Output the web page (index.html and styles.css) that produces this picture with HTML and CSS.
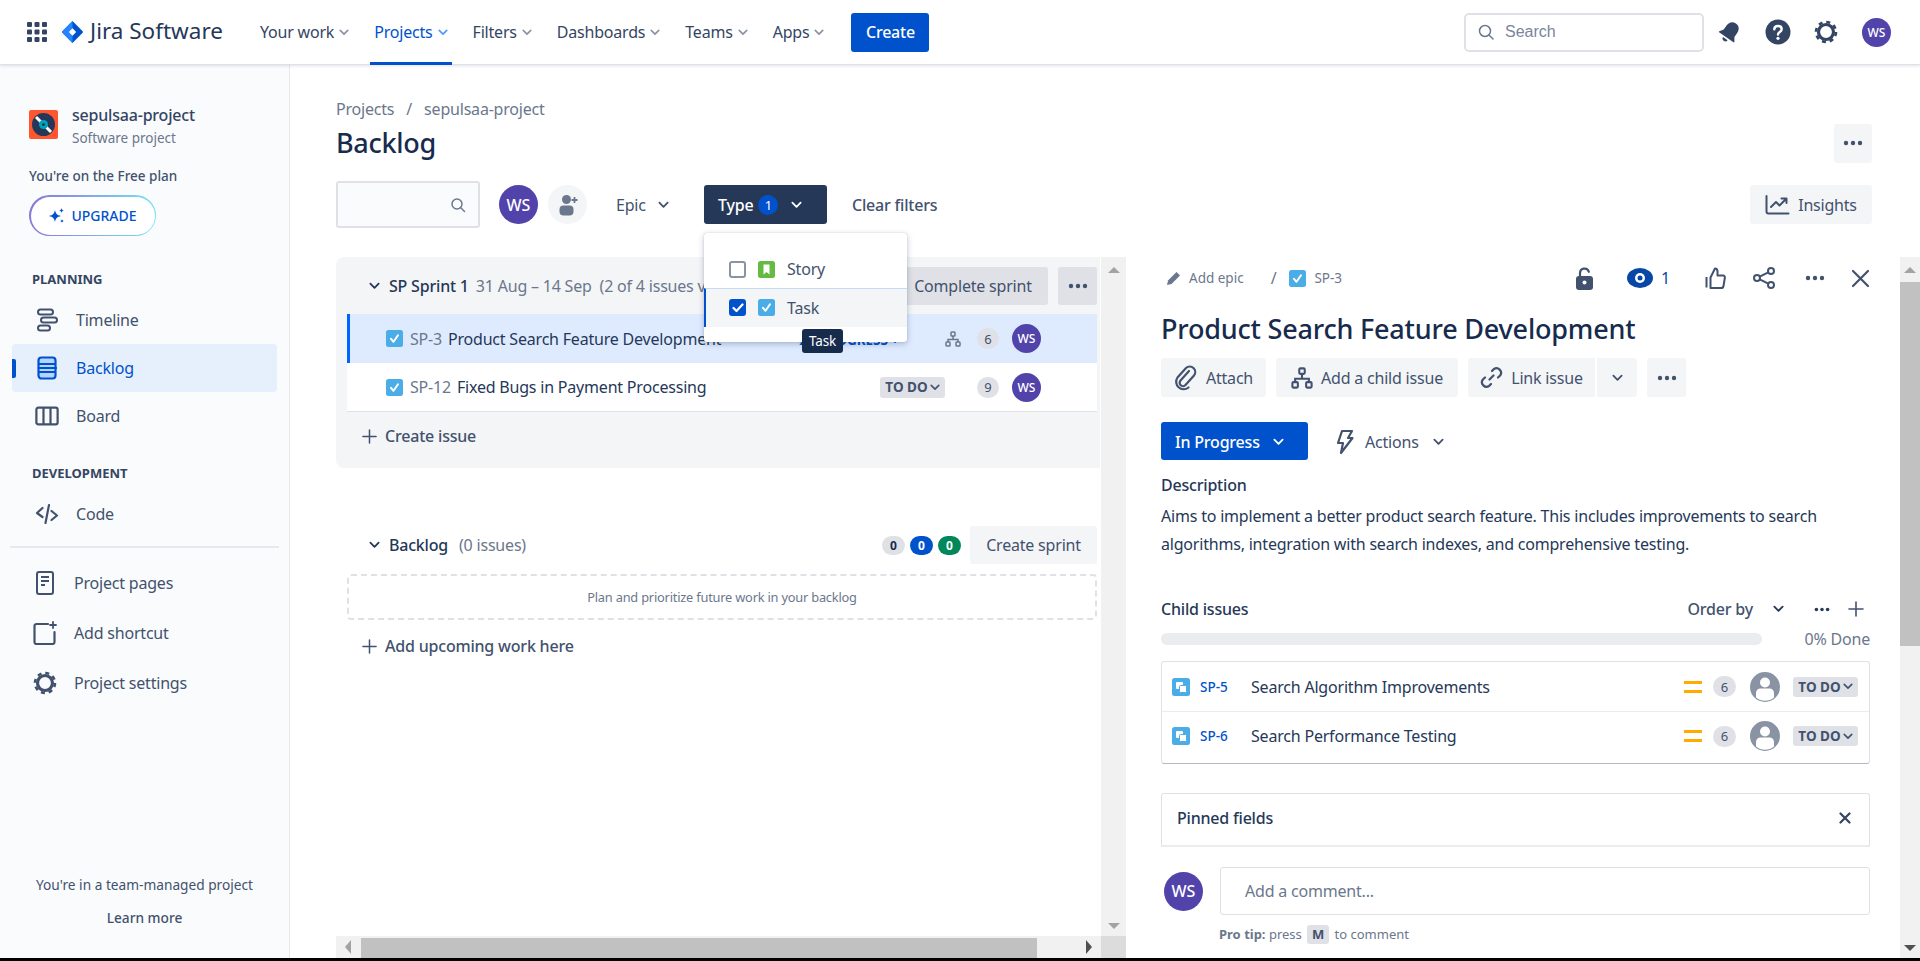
FILE: index.html
```html
<!DOCTYPE html>
<html lang="en">
<head>
  <meta charset="UTF-8" />
  <title>Backlog - sepulsaa-project</title>
  <link rel="stylesheet" href="styles.css">
</head>
<body>
<svg class="defs" width="0" height="0">
  <symbol id="chev" viewBox="0 0 12 8"><path d="M1.500 1.500 6 6l4.500-4.500" fill="none" stroke="currentColor" stroke-width="2" stroke-linecap="round" stroke-linejoin="round"/></symbol>
  <symbol id="dots" viewBox="0 0 20 6"><circle cx="3" cy="3" r="2.200" fill="currentColor"/><circle cx="10" cy="3" r="2.200" fill="currentColor"/><circle cx="17" cy="3" r="2.200" fill="currentColor"/></symbol>
  <symbol id="plus" viewBox="0 0 16 16"><path d="M8 1v14M1 8h14" stroke="currentColor" stroke-width="1.600" stroke-linecap="round"/></symbol>
  <symbol id="task" viewBox="0 0 17 17"><rect width="17" height="17" rx="2.500" fill="#4bade8"/><path d="m5 8.800 2.500 3L12 5.300" fill="none" stroke="#fff" stroke-width="2" stroke-linecap="round" stroke-linejoin="round"/></symbol>
  <symbol id="subtask" viewBox="0 0 18 18"><rect width="18" height="18" rx="2.500" fill="#4bade8"/><rect x="4" y="4" width="7" height="7" rx="1" fill="#fff"/><rect x="7.500" y="7.500" width="7" height="7" rx="1" fill="#fff" stroke="#4bade8"/></symbol>
  <symbol id="tree" viewBox="0 0 16 16"><g fill="none" stroke="currentColor" stroke-width="1.500"><rect x="6" y="1" width="4" height="4" rx=".8"/><rect x="1" y="11" width="4" height="4" rx=".8"/><rect x="11" y="11" width="4" height="4" rx=".8"/><path d="M8 5v3.500M3 11V8.500h10V11"/></g></symbol>
  <symbol id="user" viewBox="0 0 30 30"><circle cx="15" cy="15" r="15" fill="#8993a4"/><circle cx="15" cy="10.500" r="5" fill="#fff"/><path d="M6 21c0-3 2-4.500 4.500-4.500h9c2.500 0 4.500 1.500 4.500 4.500v4.500a14 14 0 0 1-18 0z" fill="#fff"/></symbol>
</svg>

<div id="app">
  <header class="topbar">
    <svg class="grid-icon" width="20" height="20" viewBox="0 0 20 20" fill="#344563">
      <rect width="5" height="5" rx="1"/><rect x="7.500" width="5" height="5" rx="1"/><rect x="15" width="5" height="5" rx="1"/>
      <rect y="7.500" width="5" height="5" rx="1"/><rect x="7.500" y="7.500" width="5" height="5" rx="1"/><rect x="15" y="7.500" width="5" height="5" rx="1"/>
      <rect y="15" width="5" height="5" rx="1"/><rect x="7.500" y="15" width="5" height="5" rx="1"/><rect x="15" y="15" width="5" height="5" rx="1"/>
    </svg>
    <svg class="logo" width="21" height="22" viewBox="0 0 21 22">
      <path d="M10.500 0 20.400 9.900a1.500 1.500 0 0 1 0 2.200L10.500 22 .6 12.100a1.500 1.500 0 0 1 0-2.200z" fill="#0052cc"/>
      <path d="M10.500 0 .6 9.900a1.500 1.500 0 0 0 0 2.200L10.500 22z" fill="#2684ff"/>
      <path d="m10.500 7.300 3.700 3.700-3.700 3.700L6.800 11z" fill="#fff"/>
    </svg>
    <span class="brand">Jira Software</span>
    <nav class="topnav">
      <a class="topnav-item">Your work <svg class="nav-chev"><use href="#chev"/></svg></a>
      <a class="topnav-item active">Projects <svg class="nav-chev"><use href="#chev"/></svg></a>
      <a class="topnav-item">Filters <svg class="nav-chev"><use href="#chev"/></svg></a>
      <a class="topnav-item">Dashboards <svg class="nav-chev"><use href="#chev"/></svg></a>
      <a class="topnav-item">Teams <svg class="nav-chev"><use href="#chev"/></svg></a>
      <a class="topnav-item">Apps <svg class="nav-chev"><use href="#chev"/></svg></a>
    </nav>
    <button class="create-btn">Create</button>
    <div class="top-right">
      <div class="top-search">
        <svg width="16" height="16" viewBox="0 0 16 16" fill="none" stroke="#6b778c" stroke-width="1.500"><circle cx="7" cy="7" r="5.500"/><path d="m11 11 4 4" stroke-linecap="round"/></svg>
        <span>Search</span>
      </div>
      <svg class="bell" width="26" height="26" viewBox="0 0 24 24" fill="#344563"><g transform="rotate(35 12 12)"><path d="M12 2.500c-4 0-6 3-6 6.500v4.500L3.500 17v1h17v-1L18 13.500V9c0-3.500-2-6.500-6-6.500z"/><path d="M9.500 19.500h5a2.500 2.500 0 0 1-5 0z"/></g></svg>
      <svg class="help" width="26" height="26" viewBox="0 0 26 26"><circle cx="13" cy="13" r="12.500" fill="#344563"/><path d="M9.300 10.300c0-2 1.600-3.300 3.700-3.300s3.700 1.300 3.700 3.200c0 2.800-3.700 2.800-3.700 5.300" fill="none" stroke="#fff" stroke-width="2.400" stroke-linecap="round"/><circle cx="13" cy="19.300" r="1.600" fill="#fff"/></svg>
      <svg class="gear" width="24" height="24" viewBox="0 0 24 24" fill="none" stroke="#344563"><circle cx="12" cy="12" r="7.500" stroke-width="3.200"/><circle cx="12" cy="12" r="10" stroke-width="2.600" stroke-dasharray="4 3.850"/></svg>
      <span class="avatar avatar-sm">WS</span>
    </div>
  </header>

  <div class="page">
    <aside class="sidebar">
      <div class="project">
        <svg class="project-logo" width="29" height="29" viewBox="0 0 29 29">
          <rect width="29" height="29" rx="2" fill="#ff5630"/>
          <circle cx="14.500" cy="14.500" r="11.500" fill="#253858"/>
          <path d="m7 7 15 15" stroke="#fff" stroke-width="3"/>
          <circle cx="14.500" cy="14.500" r="4.500" fill="#00a3bf"/>
          <circle cx="14.500" cy="14.500" r="1.500" fill="#253858"/>
        </svg>
        <div>
          <div class="project-name">sepulsaa-project</div>
          <div class="project-type">Software project</div>
        </div>
      </div>
      <p class="plan-note">You're on the Free plan</p>
      <div class="upgrade-ring"><button class="upgrade-btn">
        <svg width="18" height="18" viewBox="0 0 18 18" fill="#0052cc"><path d="M7 3c.7 3.700 2 5 6 6-4 1-5.300 2.300-6 6-.7-3.700-2-5-6-6 4-1 5.300-2.300 6-6z"/><path d="M13.500 1c.3 1.500.9 2.200 2.500 2.500-1.600.3-2.200 1-2.500 2.500-.3-1.500-.9-2.200-2.500-2.500 1.600-.3 2.200-1 2.500-2.500zM14 12c.2 1.100.7 1.600 2 2-1.300.4-1.800.9-2 2-.2-1.100-.7-1.600-2-2 1.300-.4 1.800-.9 2-2z"/></svg>
        UPGRADE</button></div>

      <h4 class="side-title planning">PLANNING</h4>
      <a class="side-item">
        <svg class="side-icon" width="24" height="24" viewBox="0 0 24 24" fill="none" stroke="currentColor" stroke-width="2"><rect x="3" y="1.500" width="15" height="5" rx="2.500"/><rect x="6" y="9.500" width="16" height="5" rx="2.500"/><rect x="3" y="17.500" width="12" height="5" rx="2.500"/></svg>
        Timeline</a>
      <a class="side-item current">
        <svg class="side-icon" width="24" height="24" viewBox="0 0 24 24" fill="none" stroke="currentColor" stroke-width="2.200"><rect x="3.500" y="1.500" width="17" height="21" rx="3" fill="#b3d4ff"/><path d="M3 8h18M3 16h18M4 12h18"/></svg>
        Backlog</a>
      <a class="side-item">
        <svg class="side-icon" width="26" height="22" viewBox="0 0 26 22" fill="none" stroke="currentColor" stroke-width="2.400"><rect x="1.500" y="2" width="23" height="18" rx="2"/><path d="M9.200 2v18M16.800 2v18"/></svg>
        Board</a>

      <h4 class="side-title development">DEVELOPMENT</h4>
      <a class="side-item">
        <svg class="side-icon" width="24" height="24" viewBox="0 0 24 24" fill="none" stroke="currentColor" stroke-width="2.200" stroke-linecap="round" stroke-linejoin="round"><path d="M7.500 6 2 11l5.500 4M16.500 9l5.500 4.500-5.500 4.500M14 3l-3.500 18"/></svg>
        Code</a>

      <hr class="side-rule">
      <a class="side-item lower">
        <svg class="side-icon" width="24" height="24" viewBox="0 0 24 24" fill="none" stroke="currentColor" stroke-width="2"><rect x="4" y="1" width="16" height="22" rx="2"/><path d="M8 6h8M8 10h8M8 14h4"/></svg>
        Project pages</a>
      <a class="side-item lower short">
        <svg class="side-icon" width="24" height="24" viewBox="0 0 24 24" fill="none" stroke="currentColor" stroke-width="2.200" stroke-linecap="round"><path d="M15 3H3.500a2 2 0 0 0-2 2v16a2 2 0 0 0 2 2h16a2 2 0 0 0 2-2V11"/><path d="M20 1v6M17 4h6" stroke-width="1.800"/></svg>
        Add shortcut</a>
      <a class="side-item lower">
        <svg class="side-icon" width="24" height="24" viewBox="0 0 24 24" fill="none" stroke="currentColor"><circle cx="12" cy="12" r="7.500" stroke-width="3.200"/><circle cx="12" cy="12" r="10" stroke-width="2.600" stroke-dasharray="4 3.850"/></svg>
        Project settings</a>

      <div class="side-foot">
        <p>You're in a team-managed project</p>
        <p class="learn">Learn more</p>
      </div>
    </aside>

    <main class="content">
      <div class="page-head">
        <div class="crumbs"><span>Projects</span><span class="crumb-sep">/</span><span>sepulsaa-project</span></div>
        <div class="title-row">
          <h1>Backlog</h1>
          <button class="ghost-btn icon-only"><svg width="22" height="6"><use href="#dots"/></svg></button>
        </div>
        <div class="filters">
          <div class="filter-search">
            <svg width="16" height="16" viewBox="0 0 16 16" fill="none" stroke="#6b778c" stroke-width="1.500"><circle cx="7" cy="7" r="5"/><path d="m10.500 10.500 4 4" stroke-linecap="round"/></svg>
          </div>
          <span class="avatar">WS</span>
          <span class="add-person">
            <svg width="24" height="24" viewBox="0 0 24 24" fill="#6b778c"><circle cx="10.500" cy="6.500" r="4.500"/><rect x="3.500" y="12.500" width="14" height="10" rx="4"/><path d="M18.500 4v6M15.500 7h6" stroke="#6b778c" stroke-width="1.800"/></svg>
          </span>
          <span class="epic">Epic <svg class="btn-chev"><use href="#chev"/></svg></span>
          <div class="type-wrap">
            <button class="type-btn">Type <span class="type-count">1</span> <svg class="btn-chev"><use href="#chev"/></svg></button>
            <div class="type-menu">
              <div class="type-option">
                <span class="check"></span>
                <svg width="17" height="17" viewBox="0 0 17 17"><rect width="17" height="17" rx="2.500" fill="#65ba43"/><path d="M5.500 3.500h6v10l-3-2.500-3 2.500z" fill="#fff"/></svg>
                Story
              </div>
              <div class="type-option selected">
                <span class="check on"><svg width="12" height="10" viewBox="0 0 12 10"><path d="m1.500 5 3 3 6-6.500" fill="none" stroke="#fff" stroke-width="2.200" stroke-linecap="round" stroke-linejoin="round"/></svg></span>
                <svg width="17" height="17"><use href="#task"/></svg>
                Task
                <span class="tooltip">Task</span>
              </div>
            </div>
          </div>
          <span class="clear">Clear filters</span>
          <button class="ghost-btn insights">
            <svg width="25" height="20" viewBox="0 0 25 20" fill="none" stroke="#42526e" stroke-width="2" stroke-linecap="round" stroke-linejoin="round"><path d="M1.500 1v15.500a2 2 0 0 0 2 2h20"/><path d="m6 12 5-5 3.500 3.500L21 4M16.500 3.500H21.500V8"/></svg>
            Insights</button>
        </div>
      </div>

      <div class="split">
        <div class="backlog-pane">
          <div class="backlog-view">
            <div class="backlog-list">
              <section class="sprint">
                <div class="group-head">
                  <svg class="group-chev"><use href="#chev"/></svg>
                  <strong>SP Sprint 1</strong>
                  <span class="group-meta">31 Aug – 14 Sep &nbsp;(2 of 4 issues visible)</span>
                  <button class="complete-btn">Complete sprint</button>
                  <button class="sprint-more"><svg width="20" height="6"><use href="#dots"/></svg></button>
                </div>
                <div class="issue picked">
                  <svg class="issue-icon"><use href="#task"/></svg>
                  <span class="issue-key">SP-3</span>
                  <span class="issue-name">Product Search Feature Development</span>
                  <span class="lozenge blue">IN PROGRESS <svg class="loz-chev"><use href="#chev"/></svg></span>
                  <svg class="tree-icon" width="16" height="16"><use href="#tree"/></svg>
                  <span class="count">6</span>
                  <span class="avatar avatar-sm">WS</span>
                </div>
                <div class="issue">
                  <svg class="issue-icon"><use href="#task"/></svg>
                  <span class="issue-key">SP-12</span>
                  <span class="issue-name">Fixed Bugs in Payment Processing</span>
                  <span class="lozenge">TO DO <svg class="loz-chev"><use href="#chev"/></svg></span>
                  <span class="tree-icon no-tree"></span>
                  <span class="count">9</span>
                  <span class="avatar avatar-sm">WS</span>
                </div>
                <div class="add-row create"><svg width="15" height="15"><use href="#plus"/></svg>Create issue</div>
              </section>

              <section class="backlog-group">
                <div class="group-head">
                  <svg class="group-chev"><use href="#chev"/></svg>
                  <strong>Backlog</strong>
                  <span class="group-meta">&nbsp;(0 issues)</span>
                  <span class="dots-count">0</span>
                  <span class="dots-count blue">0</span>
                  <span class="dots-count green">0</span>
                  <button class="ghost-btn create-sprint">Create sprint</button>
                </div>
                <div class="empty-box">Plan and prioritize future work in your backlog</div>
                <div class="add-row upcoming"><svg width="15" height="15"><use href="#plus"/></svg>Add upcoming work here</div>
              </section>
            </div>
            <div class="vbar"><i class="arrow up"></i><i class="arrow down"></i></div>
          </div>
          <div class="hbar">
            <i class="arrow left"></i>
            <span class="hbar-thumb"></span>
            <i class="arrow right"></i>
            <span class="hbar-corner"></span>
          </div>
        </div>

        <section class="detail">
          <div class="detail-top">
            <svg width="15" height="15" viewBox="0 0 15 15" fill="#6b778c"><path d="M10.500 1 14 4.500 5.500 13 1 14l1-4.500z"/></svg>
            <span class="detail-crumb">Add epic</span>
            <span class="detail-sep">/</span>
            <svg width="17" height="17"><use href="#task"/></svg>
            <span class="detail-crumb">SP-3</span>
            <div class="detail-tools">
              <svg class="tool-lock" width="19" height="23" viewBox="0 0 19 23"><path d="M5 10V6a4.500 4.500 0 0 1 8.800-1.200" fill="none" stroke="#42526e" stroke-width="2.200" stroke-linecap="round"/><rect x="1" y="9" width="17" height="14" rx="3" fill="#42526e"/><circle cx="9.500" cy="15.500" r="2" fill="#fff"/></svg>
              <svg class="tool-eye" width="26" height="20" viewBox="0 0 26 20"><ellipse cx="13" cy="10" rx="13" ry="10" fill="#0747a6"/><circle cx="13" cy="10" r="5" fill="#fff"/><circle cx="13" cy="10" r="2.500" fill="#0747a6"/></svg>
              <span class="watch-count">1</span>
              <svg class="tool-thumb" width="21" height="22" viewBox="0 0 21 22" fill="none" stroke="#42526e" stroke-width="2" stroke-linejoin="round"><path d="M1.500 10v10.500M5.500 10.500 10 1.500c2 0 2.500 1.500 2.500 3V8.500h5.500c1.500 0 2 1.200 1.800 2.500l-1.300 8c-.2 1.300-1 2-2.300 2H5.500z"/></svg>
              <svg class="tool-share" width="22" height="22" viewBox="0 0 22 22" fill="none" stroke="#42526e" stroke-width="2"><circle cx="4" cy="11" r="3"/><circle cx="18" cy="4" r="3"/><circle cx="18" cy="18" r="3"/><path d="m6.700 9.600 8.600-4.300M6.700 12.400l8.600 4.300"/></svg>
              <svg class="tool-more" width="20" height="6"><use href="#dots"/></svg>
              <svg class="tool-close" width="19" height="19" viewBox="0 0 19 19"><path d="m2 2 15 15M17 2 2 17" stroke="#42526e" stroke-width="2.200" stroke-linecap="round"/></svg>
            </div>
          </div>
          <h2 class="detail-title">Product Search Feature Development</h2>
          <div class="detail-actions">
            <button class="ghost-btn attach">
              <svg width="24" height="26" viewBox="0 0 24 26" fill="none" stroke="#42526e" stroke-width="2.200" stroke-linecap="round"><path d="m15 6-8.500 9.500a3.300 3.300 0 0 0 5 4.500L20 10.500a5.500 5.500 0 0 0-8-7.500L3.500 12.500a7.500 7.500 0 0 0 11 10"/></svg>
              Attach</button>
            <button class="ghost-btn child">
              <svg width="22" height="24" viewBox="0 0 16 16"><use href="#tree"/></svg>
              Add a child issue</button>
            <div class="link-group">
              <button class="ghost-btn link">
                <svg width="23" height="23" viewBox="0 0 23 23" fill="none" stroke="#42526e" stroke-width="2.200" stroke-linecap="round"><path d="m9.500 13.500 4-4M12 5l1.800-1.800a4.500 4.500 0 0 1 6.300 6.300L18 11.500M11 18l-1.800 1.800a4.500 4.500 0 0 1-6.300-6.300L5 11.500"/></svg>
                Link issue</button>
              <button class="ghost-btn link-more"><svg class="btn-chev"><use href="#chev"/></svg></button>
            </div>
            <button class="ghost-btn action-more"><svg width="20" height="6"><use href="#dots"/></svg></button>
          </div>
          <div class="status-row">
            <button class="status-btn">In Progress <svg class="btn-chev"><use href="#chev"/></svg></button>
            <span class="actions">
              <svg width="18" height="26" viewBox="0 0 18 26" fill="none" stroke="#42526e" stroke-width="2.200" stroke-linejoin="round"><path d="M6 2h10l-4 7h4.500L5 24l2-10H2z"/></svg>
              Actions <svg class="btn-chev"><use href="#chev"/></svg></span>
          </div>
          <h3 class="desc-label">Description</h3>
          <p class="desc">Aims to implement a better product search feature. This includes improvements to search algorithms, integration with search indexes, and comprehensive testing.</p>

          <div class="child-head">
            <h3>Child issues</h3>
            <span class="order">Order by</span>
            <svg class="btn-chev order-chev"><use href="#chev"/></svg>
            <svg class="child-dots" width="16" height="5"><use href="#dots"/></svg>
            <svg class="child-plus" width="16" height="16"><use href="#plus"/></svg>
          </div>
          <div class="progress">
            <div class="progress-bar"></div>
            <span>0% Done</span>
          </div>
          <div class="child-list">
            <div class="child-row">
              <svg width="18" height="18"><use href="#subtask"/></svg>
              <span class="child-key">SP-5</span>
              <span class="child-name">Search Algorithm Improvements</span>
              <span class="priority"></span>
              <span class="count">6</span>
              <svg class="child-user" width="30" height="30"><use href="#user"/></svg>
              <span class="lozenge">TO DO <svg class="loz-chev"><use href="#chev"/></svg></span>
            </div>
            <div class="child-row">
              <svg width="18" height="18"><use href="#subtask"/></svg>
              <span class="child-key">SP-6</span>
              <span class="child-name">Search Performance Testing</span>
              <span class="priority"></span>
              <span class="count">6</span>
              <svg class="child-user" width="30" height="30"><use href="#user"/></svg>
              <span class="lozenge">TO DO <svg class="loz-chev"><use href="#chev"/></svg></span>
            </div>
          </div>
          <div class="pinned">
            <span>Pinned fields</span>
            <svg width="12" height="12" viewBox="0 0 12 12"><path d="m1.500 1.500 9 9M10.500 1.500l-9 9" stroke="#344563" stroke-width="2.200" stroke-linecap="round"/></svg>
          </div>
          <div class="comment">
            <span class="avatar">WS</span>
            <div class="comment-box">Add a comment...</div>
          </div>
          <p class="tip"><b>Pro tip:</b> press <kbd>M</kbd> to comment</p>
        </section>
        <div class="vbar detail-bar"><i class="arrow up"></i><span class="vbar-thumb"></span><i class="arrow down"></i></div>
      </div>
    </main>
  </div>
  <div class="blackline"></div>
</div>
</body>
</html>
```

FILE: styles.css
```css
* {
  box-sizing: border-box;
}

html, body {
  margin: 0;
  height: 961px;
  overflow: hidden;
}

body {
  font-family: "Noto Sans", "Open Sans", sans-serif;
  font-size: 16px;
  letter-spacing: -0.2px;
  color: #172b4d;
  background-color: #fff;
}

button {
  font: inherit;
  letter-spacing: inherit;
  border: none;
  cursor: pointer;
}

h1, h2, h3, h4, p {
  margin: 0;
  font-weight: 400;
}

.defs {
  position: absolute;
}

#app {
  height: 961px;
  display: flex;
  flex-direction: column;
}

/* top bar */
.topbar {
  height: 65px;
  flex: none;
  display: flex;
  align-items: center;
  background-color: #fff;
  border-bottom: 1px solid #dfe1e6;
  box-shadow: 0 1px 3px rgba(9, 30, 66, 0.13);
  position: relative;
  z-index: 3;
}

.grid-icon {
  margin-left: 27px;
  flex: none;
}

.logo {
  margin-left: 15px;
  flex: none;
}

.brand {
  margin: 0 0 3px 7px;
  width: 133px;
  font-size: 22.500px;
  color: #253858;
  letter-spacing: 0;
  white-space: nowrap;
}

.topnav {
  display: flex;
  height: 65px;
  margin-left: 33px;
}

.topnav-item {
  display: flex;
  align-items: center;
  gap: 5px;
  padding: 0 4px;
  margin-right: 17px;
  color: #344563;
  white-space: nowrap;
  position: relative;
}

.topnav-item.active {
  color: #0052cc;
}

.topnav-item.active::after {
  content: "";
  position: absolute;
  left: 0;
  right: 0;
  bottom: 0;
  height: 3px;
  background-color: #0052cc;
}

.nav-chev {
  width: 10px;
  height: 7px;
  color: #8993a4;
}

.active .nav-chev {
  color: #4c9aff;
}

.create-btn {
  width: 78px;
  height: 39px;
  margin-left: 6px;
  background-color: #0052cc;
  color: #fff;
  font-weight: 500;
  border-radius: 3px;
}

.top-right {
  margin-left: auto;
  display: flex;
  align-items: center;
  padding-right: 29px;
}

.top-search {
  width: 240px;
  height: 39px;
  display: flex;
  align-items: center;
  gap: 11px;
  padding-left: 12px;
  border: 2px solid #dfe1e6;
  border-radius: 5px;
  font-family: "Liberation Sans", Arial, sans-serif;
  letter-spacing: 0;
  color: #7a869a;
}

.bell {
  margin-left: 13px;
}

.help {
  margin-left: 22px;
}

.gear {
  margin-left: 23px;
}

.avatar {
  flex: none;
  width: 39px;
  height: 39px;
  border-radius: 50%;
  background-color: #5243aa;
  color: #fff;
  display: flex;
  align-items: center;
  justify-content: center;
  font-weight: 500;
  letter-spacing: 0;
}

.avatar-sm {
  width: 29px;
  height: 29px;
  font-size: 12px;
}

.top-right .avatar {
  margin-left: 24px;
}

/* sidebar */
.page {
  flex: 1;
  display: flex;
  min-height: 0;
}

.sidebar {
  width: 290px;
  flex: none;
  background-color: #fafbfc;
  border-right: 1px solid #e6e8ec;
  padding: 45px 12px 0;
  display: flex;
  flex-direction: column;
}

.project {
  display: flex;
  gap: 14px;
  padding-left: 17px;
  height: 40px;
}

.project-logo {
  flex: none;
  margin-top: 0;
}

.project-name {
  font-weight: 500;
  color: #344563;
  line-height: 20px;
  margin-top: -5px;
}

.project-type {
  font-size: 13.500px;
  letter-spacing: 0;
  line-height: 18px;
  margin-top: 4px;
  color: #6b778c;
}

.plan-note {
  font-size: 13.500px;
  letter-spacing: 0;
  font-weight: 500;
  color: #42526e;
  padding-left: 17px;
  line-height: 18px;
  margin-top: 17px;
}

.upgrade-ring {
  width: 127px;
  height: 41px;
  margin: 10px 0 0 17px;
  padding: 1.500px;
  border-radius: 21px;
  background: linear-gradient(90deg, #8777d9, #79e2f2);
}

.upgrade-btn {
  width: 100%;
  height: 100%;
  display: flex;
  align-items: center;
  justify-content: center;
  gap: 5px;
  border-radius: 20px;
  background-color: #fff;
  color: #0052cc;
  font-size: 14px;
  font-weight: 500;
  letter-spacing: 0;
}

.side-title {
  font-size: 13px;
  font-weight: 700;
  color: #344563;
  padding-left: 20px;
  line-height: 18px;
  letter-spacing: 0;
}

.planning {
  margin: 34px 0 8px;
}

.development {
  margin: 24px 0 8px;
}

.side-item {
  height: 48px;
  display: flex;
  align-items: center;
  gap: 17px;
  padding-left: 23px;
  color: #42526e;
  border-radius: 4px;
  position: relative;
}

.side-icon {
  flex: none;
  width: 24px;
  height: 24px;
}

.side-item.current {
  color: #0052cc;
  background-color: #e6effc;
}

.side-item.current::before {
  content: "";
  position: absolute;
  left: 0;
  top: 15px;
  width: 4px;
  height: 19px;
  background-color: #0052cc;
  border-radius: 0 2px 2px 0;
}

.side-rule {
  margin: 8px -2px 0;
  height: 2px;
  border: none;
  background-color: #e8e9ec;
}

.side-item.lower {
  gap: 17px;
  padding-left: 21px;
  height: 50px;
}

.side-rule + .side-item.lower {
  margin-top: 10px;
}

.side-foot {
  margin-top: auto;
  padding-bottom: 31px;
  text-align: center;
  font-size: 13.700px;
  letter-spacing: 0;
  color: #42526e;
}

.learn {
  margin-top: 14px;
  font-weight: 500;
}

/* page head */
.content {
  flex: 1;
  min-width: 0;
  display: flex;
  flex-direction: column;
}

.page-head {
  padding: 32px 48px 0 46px;
  height: 192px;
  flex: none;
}

.crumbs {
  display: flex;
  gap: 10px;
  color: #6b778c;
  line-height: 24px;
  height: 24px;
}

.crumb-sep {
  margin: 0 2px;
}

.title-row {
  display: flex;
  justify-content: space-between;
  align-items: center;
  height: 38px;
  margin-top: 3px;
}

.title-row h1 {
  font-size: 27px;
  font-weight: 500;
  line-height: 38px;
  letter-spacing: -0.3px;
}

.ghost-btn {
  height: 39px;
  background-color: #f4f5f7;
  color: #42526e;
  border-radius: 3px;
  display: flex;
  align-items: center;
  justify-content: center;
  gap: 8px;
  white-space: nowrap;
}

.icon-only {
  width: 38px;
}

.filters {
  display: flex;
  align-items: center;
  height: 47px;
  margin-top: 19px;
}

.filter-search {
  width: 144px;
  height: 47px;
  background-color: #fafbfc;
  border: 2px solid #dfe1e6;
  border-radius: 3px;
  display: flex;
  align-items: center;
  justify-content: flex-end;
  padding-right: 12px;
}

.filters .avatar {
  margin-left: 19px;
}

.add-person {
  width: 39px;
  height: 39px;
  margin-left: 10px;
  border-radius: 50%;
  background-color: #f4f5f7;
  display: flex;
  align-items: center;
  justify-content: center;
}

.epic {
  margin-left: 29px;
  width: 88px;
  color: #42526e;
  display: flex;
  align-items: center;
  gap: 12px;
}

.btn-chev {
  width: 11px;
  height: 8px;
  flex: none;
}

.type-wrap {
  position: relative;
}

.type-btn {
  width: 123px;
  height: 39px;
  background-color: #253858;
  color: #fff;
  font-weight: 500;
  border-radius: 3px;
  display: flex;
  align-items: center;
  padding-left: 14px;
  gap: 5px;
}

.type-count {
  width: 20px;
  height: 20px;
  border-radius: 50%;
  background-color: #0052cc;
  font-size: 13px;
  font-weight: 400;
  display: flex;
  align-items: center;
  justify-content: center;
}

.type-btn .btn-chev {
  margin-left: 8px;
}

.type-menu {
  position: absolute;
  top: 48px;
  left: 0;
  width: 203px;
  height: 109px;
  padding-top: 17px;
  background-color: #fff;
  border-radius: 3px;
  box-shadow: 0 2px 6px rgba(9, 30, 66, 0.25), 0 0 1px rgba(9, 30, 66, 0.3);
  z-index: 5;
}

.type-option {
  height: 38px;
  display: flex;
  align-items: center;
  padding-left: 25px;
  color: #42526e;
  gap: 12px;
  position: relative;
}

.type-option.selected {
  height: 39px;
  padding: 0 0 1px 23px;
  background-color: #f4f5f7;
  border-top: 1px solid #c6dcf5;
  border-left: 2px solid #0052cc;
}

.check {
  width: 17px;
  height: 17px;
  border: 2px solid #8993a4;
  border-radius: 3px;
  background-color: #fff;
  display: flex;
  align-items: center;
  justify-content: center;
}

.check.on {
  background-color: #0052cc;
  border-color: #0052cc;
}

.tooltip {
  position: absolute;
  left: 96px;
  top: 40px;
  width: 41px;
  height: 24px;
  background-color: #172b4d;
  color: #fff;
  font-size: 13.500px;
  border-radius: 3px;
  display: flex;
  align-items: center;
  justify-content: center;
  z-index: 6;
}

.clear {
  margin-left: 25px;
  color: #42526e;
  font-weight: 500;
}

.insights {
  margin-left: auto;
  width: 122px;
}

/* backlog list */
.split {
  flex: 1;
  min-height: 0;
  display: flex;
  padding-left: 46px;
}

.backlog-pane {
  width: 790px;
  flex: none;
  display: flex;
  flex-direction: column;
}

.backlog-view {
  flex: 1;
  min-height: 0;
  display: flex;
}

.backlog-list {
  width: 765px;
  flex: none;
  overflow: hidden;
}

.vbar {
  width: 25px;
  flex: none;
  background-color: #f1f1f1;
  display: flex;
  flex-direction: column;
  align-items: center;
}

.detail-bar {
  width: 20px;
}

.arrow {
  display: block;
  width: 0;
  height: 0;
  border-style: solid;
  border-color: transparent;
  flex: none;
}

.arrow.up {
  margin-top: 10px;
  border-width: 0 6px 6px;
  border-bottom-color: #a3a3a3;
}

.arrow.down {
  margin-top: auto;
  margin-bottom: 7px;
  border-width: 6px 6px 0;
  border-top-color: #a3a3a3;
}

.sprint {
  width: 764px;
  height: 211px;
  background-color: #f4f5f7;
  border-radius: 8px 0 0 8px;
  padding: 10px 3px 0 11px;
}

.group-head {
  height: 38px;
  display: flex;
  align-items: center;
  padding-left: 22px;
}

.sprint .group-head {
  margin-bottom: 9px;
}

.group-chev {
  width: 11px;
  height: 8px;
  flex: none;
  margin-right: 9px;
  color: #253858;
}

.group-head strong {
  font-weight: 500;
  color: #253858;
  white-space: nowrap;
}

.group-meta {
  margin-left: 7px;
  color: #6b778c;
  white-space: nowrap;
  overflow: hidden;
  min-width: 0;
}

.complete-btn {
  margin-left: auto;
  width: 148px;
  height: 38px;
  flex: none;
  background-color: #dfe1e6;
  color: #42526e;
  border-radius: 3px;
  padding-left: 4px;
  white-space: nowrap;
}

.sprint-more {
  width: 39px;
  height: 38px;
  flex: none;
  margin-left: 10px;
  background-color: #dfe1e6;
  color: #42526e;
  border-radius: 3px;
  display: flex;
  align-items: center;
  justify-content: center;
}

.issue {
  height: 49px;
  display: flex;
  align-items: center;
  padding-left: 39px;
  padding-right: 56px;
  background-color: #fff;
  border-bottom: 1px solid #dfe1e6;
}

.issue.picked {
  background-color: #deebff;
  box-shadow: inset 3px 0 0 #0065ff;
  border-bottom: none;
}

.issue-icon {
  width: 17px;
  height: 17px;
  flex: none;
}

.issue-key {
  margin-left: 7px;
  color: #6b778c;
  white-space: nowrap;
}

.issue-name {
  margin-left: 6px;
  color: #253858;
  white-space: nowrap;
}

.lozenge {
  flex: none;
  width: 65px;
  height: 21px;
  margin-left: auto;
  background-color: #dfe1e6;
  color: #42526e;
  border-radius: 3px;
  font-size: 13.500px;
  font-weight: 700;
  letter-spacing: 0;
  display: flex;
  align-items: center;
  justify-content: center;
  gap: 2px;
  white-space: nowrap;
}

.lozenge.blue {
  width: auto;
  margin-top: 3px;
  margin-right: 45px;
  background-color: transparent;
  color: #0052cc;
}

.loz-chev {
  width: 10px;
  height: 7px;
}

.tree-icon {
  flex: none;
  width: 16px;
  height: 16px;
  color: #6b778c;
}

.no-tree {
  display: block;
}

.count {
  flex: none;
  width: 22px;
  height: 21px;
  margin-left: 16px;
  border-radius: 11px;
  background-color: #dfe1e6;
  color: #42526e;
  font-size: 13px;
  letter-spacing: 0;
  display: flex;
  align-items: center;
  justify-content: center;
}

.issue .avatar {
  margin-left: 13px;
}

.add-row {
  display: flex;
  align-items: center;
  gap: 8px;
  height: 24px;
  padding-left: 15px;
  color: #42526e;
  font-weight: 500;
}

.add-row.create {
  margin-top: 12px;
}

.add-row.upcoming {
  margin: 14px 0 0 11px;
}

.backlog-group {
  margin-top: 58px;
}

.backlog-group .group-head {
  margin-left: 11px;
  margin-right: 4px;
}

.dots-count {
  flex: none;
  width: 23px;
  height: 19px;
  border-radius: 10px;
  background-color: #dfe1e6;
  color: #172b4d;
  font-size: 12px;
  font-weight: 700;
  letter-spacing: 0;
  display: flex;
  align-items: center;
  justify-content: center;
  margin-left: 5px;
}

.dots-count.blue {
  background-color: #0052cc;
  color: #fff;
}

.dots-count.green {
  background-color: #00875a;
  color: #fff;
}

.group-head .group-meta + .dots-count {
  margin-left: auto;
}

.create-sprint {
  flex: none;
  width: 127px;
  height: 38px;
  margin-left: 9px;
}

.empty-box {
  height: 46px;
  margin: 10px 4px 0 11px;
  border: 2px dashed #dfe1e6;
  border-radius: 4px;
  display: flex;
  align-items: center;
  justify-content: center;
  font-size: 12.800px;
  color: #6b778c;
}

.hbar {
  height: 22px;
  flex: none;
  display: flex;
  align-items: center;
  background-color: #f1f1f1;
}

.arrow.left {
  margin-left: 9px;
  border-width: 7px 6px 7px 0;
  border-right-color: #a3a3a3;
}

.hbar-thumb {
  width: 676px;
  height: 20px;
  margin: 2px 0 0 10px;
  background-color: #c1c1c1;
}

.arrow.right {
  margin-left: 49px;
  border-width: 7px 0 7px 6px;
  border-left-color: #505050;
}

.hbar-corner {
  margin-left: auto;
  width: 25px;
  height: 22px;
  background-color: #dcdcdc;
}

/* issue detail */
.detail {
  width: 774px;
  flex: none;
  padding: 0 30px 0 35px;
  overflow: hidden;
}

.detail-top {
  height: 42px;
  display: flex;
  align-items: center;
  padding-left: 5px;
}

.detail-crumb {
  font-size: 13.500px;
  color: #6b778c;
  margin-left: 8px;
  letter-spacing: 0;
}

.detail-sep {
  margin: 0 13px 0 27px;
  color: #6b778c;
}

.detail-tools {
  margin-left: auto;
  display: flex;
  align-items: center;
  color: #42526e;
}

.tool-eye {
  margin-left: 33px;
}

.watch-count {
  margin-left: 8px;
  color: #0747a6;
}

.tool-thumb {
  margin-left: 35px;
}

.tool-share {
  margin-left: 27px;
}

.tool-more {
  margin-left: 30px;
}

.tool-close {
  margin-left: 26px;
}

.detail-title {
  margin-top: 12px;
  font-size: 27px;
  font-weight: 500;
  line-height: 36px;
  white-space: nowrap;
  letter-spacing: -0.2px;
}

.detail-actions {
  margin-top: 11px;
  display: flex;
  gap: 10px;
}

.attach {
  width: 105px;
}

.child {
  width: 182px;
}

.link-group {
  display: flex;
  gap: 2px;
}

.link {
  width: 127px;
  border-radius: 3px 0 0 3px;
}

.link-more {
  width: 40px;
  border-radius: 0 3px 3px 0;
}

.action-more {
  width: 39px;
}

.status-row {
  margin-top: 25px;
  display: flex;
  align-items: center;
}

.status-btn {
  width: 147px;
  height: 38px;
  padding: 2px 0 0 14px;
  background-color: #0052cc;
  color: #fff;
  font-weight: 500;
  border-radius: 3px;
  display: flex;
  align-items: center;
  gap: 13px;
}

.actions {
  margin: 2px 0 0 28px;
  color: #42526e;
  display: flex;
  align-items: center;
  gap: 11px;
}

.actions .btn-chev {
  margin-left: 3px;
}

.desc-label {
  margin-top: 13px;
  font-size: 16px;
  font-weight: 500;
  line-height: 24px;
  color: #253858;
}

.desc {
  margin-top: 5px;
  line-height: 28px;
  color: #253858;
}

.child-head {
  margin-top: 39px;
  height: 24px;
  display: flex;
  align-items: center;
  color: #253858;
}

.child-head h3 {
  font-size: 16px;
  font-weight: 500;
}

.order {
  margin-left: auto;
  color: #42526e;
  font-weight: 500;
}

.order-chev {
  margin-left: 20px;
}

.child-dots {
  margin-left: 30px;
}

.child-plus {
  margin: 0 6px 0 18px;
  color: #42526e;
}

.progress {
  margin-top: 6px;
  height: 24px;
  display: flex;
  align-items: center;
  justify-content: space-between;
  color: #6b778c;
}

.progress-bar {
  width: 601px;
  height: 12px;
  border-radius: 6px;
  background-color: #ebecf0;
}

.child-list {
  margin-top: 10px;
  height: 103px;
  border: 1px solid #dfe1e6;
  border-bottom-color: #b3bac5;
  border-radius: 3px;
}

.child-row {
  height: 49px;
  display: flex;
  align-items: center;
  padding: 0 11px 0 10px;
}

.child-row + .child-row {
  height: 52px;
  padding-bottom: 3px;
  border-top: 1px solid #ebecf0;
}

.child-key {
  margin-left: 10px;
  width: 51px;
  font-size: 13.500px;
  font-weight: 500;
  color: #0052cc;
  letter-spacing: 0;
}

.child-name {
  color: #253858;
}

.priority {
  margin-left: auto;
  width: 18px;
  height: 12px;
  border-top: 3px solid #ffab00;
  border-bottom: 3px solid #ffab00;
}

.child-row .count {
  width: 23px;
  margin-left: 11px;
}

.child-user {
  margin-left: 14px;
  flex: none;
}

.child-row .lozenge {
  margin-left: 13px;
  height: 20px;
}

.pinned {
  margin-top: 29px;
  height: 54px;
  padding: 0 18px 4px 15px;
  border: 1px solid #dfe1e6;
  border-bottom: 2px solid #ebecf0;
  border-radius: 3px 3px 0 0;
  display: flex;
  align-items: center;
  justify-content: space-between;
  color: #253858;
  font-weight: 500;
}

.comment {
  margin-top: 20px;
  display: flex;
  align-items: center;
  padding-left: 3px;
  gap: 17px;
}

.comment-box {
  flex: 1;
  height: 48px;
  border: 1px solid #dfe1e6;
  border-radius: 3px;
  display: flex;
  align-items: center;
  padding-left: 24px;
  color: #6b778c;
}

.tip {
  margin: 9px 0 0 58px;
  font-size: 13px;
  line-height: 20px;
  color: #6b778c;
  letter-spacing: 0;
}

.tip b {
  font-weight: 700;
}

kbd {
  display: inline-block;
  width: 22px;
  height: 19px;
  line-height: 19px;
  margin: 0 2px;
  text-align: center;
  font-family: inherit;
  font-weight: 700;
  color: #42526e;
  background-color: #dfe1e6;
  border-radius: 3px;
}

.vbar-thumb {
  width: 20px;
  height: 364px;
  margin-top: 9px;
  background-color: #c1c1c1;
}

.detail-bar .arrow.down {
  border-top-color: #505050;
}

.blackline {
  height: 3px;
  flex: none;
  background-color: #000;
}
```
